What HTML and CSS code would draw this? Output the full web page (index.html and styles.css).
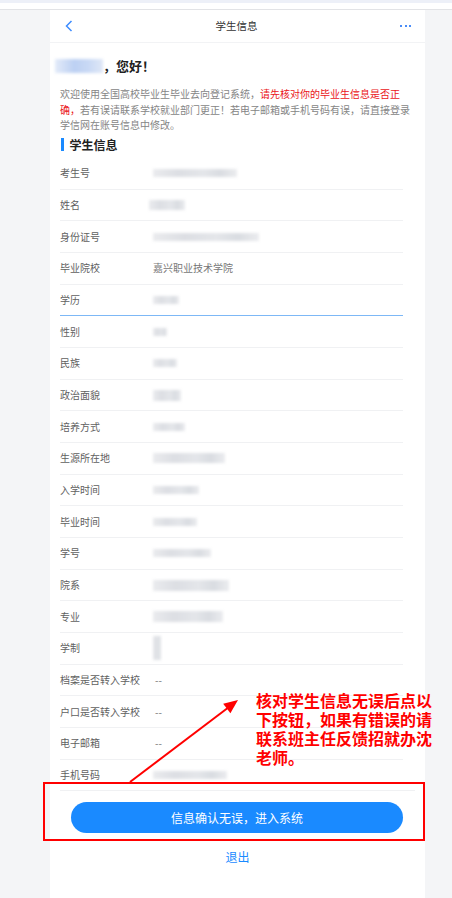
FILE: index.html
```html
<!DOCTYPE html>
<html lang="zh-CN">
<head>
<meta charset="utf-8">
<title>学生信息</title>
<link rel="stylesheet" href="styles.css">
</head>
<body>
<div class="topstrip"></div>
<div class="panel">
  <div class="header">
    <svg class="back" width="8" height="12" viewBox="0 0 8 12"><path d="M6.5 1 L1.5 6 L6.5 11" fill="none" stroke="#3d8cff" stroke-width="1.5"/></svg>
    <div class="title">学生信息</div>
    <div class="dots"><i></i><i></i><i></i></div>
  </div>
  <div class="content">
    <div class="greeting"><span class="nameblur"></span><span class="hello">，您好！</span></div>
    <p class="intro">欢迎使用全国高校毕业生毕业去向登记系统，<span class="red">请先核对你的毕业生信息是否正<br>确，</span>若有误请联系学校就业部门更正！若电子邮箱或手机号码有误，请直接登录<br>学信网在账号信息中修改。</p>
    <div class="section"><span class="bar"></span>学生信息</div>
    <div class="list">
      <div class="row"><span class="label">考生号</span><span class="blur" style="width:84px"></span></div>
      <div class="row"><span class="label">姓名</span><span class="blur" style="width:36px;margin-left:-4px;height:10px"></span></div>
      <div class="row"><span class="label">身份证号</span><span class="blur" style="width:106px"></span></div>
      <div class="row"><span class="label">毕业院校</span><span class="value">嘉兴职业技术学院</span></div>
      <div class="row active"><span class="label">学历</span><span class="blur" style="width:26px"></span></div>
      <div class="row"><span class="label">性别</span><span class="blur" style="width:14px"></span></div>
      <div class="row"><span class="label">民族</span><span class="blur" style="width:24px"></span></div>
      <div class="row"><span class="label">政治面貌</span><span class="blur" style="width:28px;height:11px"></span></div>
      <div class="row"><span class="label">培养方式</span><span class="blur" style="width:32px"></span></div>
      <div class="row"><span class="label">生源所在地</span><span class="blur" style="width:72px;height:10px"></span></div>
      <div class="row"><span class="label">入学时间</span><span class="blur" style="width:46px"></span></div>
      <div class="row"><span class="label">毕业时间</span><span class="blur" style="width:44px"></span></div>
      <div class="row"><span class="label">学号</span><span class="blur" style="width:58px"></span></div>
      <div class="row"><span class="label">院系</span><span class="blur" style="width:76px;height:11px"></span></div>
      <div class="row"><span class="label">专业</span><span class="blur" style="width:70px;height:11px"></span></div>
      <div class="row"><span class="label">学制</span><span class="blur" style="width:8px;height:24px"></span></div>
      <div class="row"><span class="label">档案是否转入学校</span><span class="dash">--</span></div>
      <div class="row"><span class="label">户口是否转入学校</span><span class="dash">--</span></div>
      <div class="row"><span class="label">电子邮箱</span><span class="dash">--</span></div>
      <div class="row last"><span class="label">手机号码</span><span class="blur" style="width:74px"></span></div>
    </div>
  </div>
  <div class="footer">
    <button class="confirm">信息确认无误，进入系统</button>
    <a class="logout">退出</a>
  </div>
</div>
<div class="redbox"></div>
<div class="note">核对学生信息无误后点以下按钮，如果有错误的请联系班主任反馈招就办沈老师。</div>
<svg class="arrow" width="452" height="898" viewBox="0 0 452 898"><line x1="130" y1="782" x2="229" y2="707" stroke="#ff0000" stroke-width="2"/><polygon points="238,700 223.2,703.7 230.4,713.3" fill="#ff0000"/></svg>
</body>
</html>
```
FILE: styles.css
```css
* { box-sizing: border-box; }
html, body { margin: 0; padding: 0; }
body {
  background: #f4f5f7;
  font-family: "Noto Sans CJK SC", "Noto Sans", sans-serif;
  color: #333;
  position: relative;
  min-height: 898px;
  overflow: hidden;
}
.topstrip {
  height: 10px;
  background: #fff;
  border-top: 3px solid #edf0f8;
  border-bottom: 1px solid #e2e3e6;
}
.panel {
  width: 375px;
  margin-left: 50px;
  background: #fff;
  min-height: 888px;
}
.header {
  height: 33px;
  display: flex;
  align-items: center;
  justify-content: space-between;
  padding: 0 14px 0 15px;
  border-bottom: 1px solid #f2f3f5;
}
.back { display: block; }
.title { font-size: 10.5px; color: #333; line-height: 16px; }
.dots { display: flex; gap: 2.5px; width: 11px; }
.dots i { width: 2px; height: 2px; background: #4a8cf7; display: block; }
.content { padding: 0 22px 0 10px; }
.greeting {
  margin-top: 13px;
  height: 20px;
  display: flex;
  align-items: center;
}
.nameblur {
  width: 48px;
  height: 14px;
  margin-left: -5px;
  background: linear-gradient(90deg, #e3ebf9, #bcd0f2 40%, #c9d9f5 70%, #dfe7f6);
  filter: blur(1.5px);
}
.hello { font-size: 13px; font-weight: 700; color: #222; line-height: 20px; }
.intro {
  margin: 10px 0 0;
  font-size: 10px;
  line-height: 15.5px;
  color: #858585;
  white-space: nowrap;
}
.red { color: #ea1420; }
.section {
  margin-top: 4px;
  height: 16px;
  display: flex;
  align-items: center;
  font-size: 12px;
  font-weight: 700;
  color: #222;
  line-height: 16px;
}
.bar {
  width: 2.5px;
  height: 13px;
  background: #1a8aff;
  margin: 0 6px 0 1px;
}
.list { margin-top: 5.5px; }
.row {
  height: 31.68px;
  border-bottom: 1px solid #f0f1f3;
  display: flex;
  align-items: center;
  font-size: 10px;
}
.row.active { border-bottom: 1px solid #7db8f6; }
.row.last { margin-right: -12px; }
.label { width: 93px; flex: none; color: #5f5f5f; line-height: 14px; }
.value { color: #777; line-height: 14px; }
.dash { color: #777; line-height: 14px; margin-left: 2px; }
.blur {
  display: inline-block;
  height: 8px;
  background: linear-gradient(90deg, #eaebee, #dcdee3 30%, #e4e6ea 60%, #d9dce1 80%, #ebecef);
  filter: blur(1.8px);
}
.footer {
  margin-top: 11px;
  display: flex;
  flex-direction: column;
  align-items: center;
}
.confirm {
  width: 332px;
  height: 31px;
  border: 0;
  border-radius: 16px;
  background: #1a8aff;
  color: #fff;
  font-family: inherit;
  font-size: 12px;
  padding: 0;
  margin-left: -1px;
}
.logout {
  margin-top: 16px;
  font-size: 12px;
  line-height: 16px;
  color: #1a8aff;
}
.redbox {
  position: absolute;
  left: 43px;
  top: 782px;
  width: 382px;
  height: 59px;
  border: 2px solid #ff0000;
}
.note {
  position: absolute;
  left: 256px;
  top: 691px;
  width: 180px;
  font-size: 16px;
  font-weight: 700;
  line-height: 19px;
  color: #ff0000;
}
.arrow {
  position: absolute;
  left: 0;
  top: 0;
  pointer-events: none;
}
```
